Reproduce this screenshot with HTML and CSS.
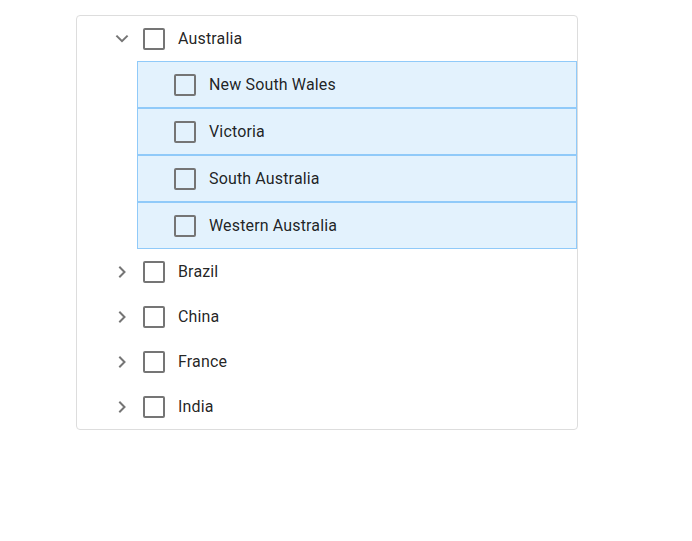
FILE: index.html
```html
<!DOCTYPE html>
<html>
<head>
<meta charset="utf-8">
<link rel="stylesheet" href="styles.css">
</head>
<body>
<div class="tree">
  <div class="row">
    <span class="toggle"><svg width="24" height="24" viewBox="0 0 24 24"><path d="M6.4 8.6 12 14.2l5.6-5.6" fill="none" stroke="#757575" stroke-width="2"/></svg></span>
    <span class="box"></span>
    <span class="label">Australia</span>
  </div>
  <div class="children">
    <div class="child"><span class="box"></span><span class="label">New South Wales</span></div>
    <div class="child"><span class="box"></span><span class="label">Victoria</span></div>
    <div class="child"><span class="box"></span><span class="label">South Australia</span></div>
    <div class="child"><span class="box"></span><span class="label">Western Australia</span></div>
  </div>
  <div class="row">
    <span class="toggle"><svg width="24" height="24" viewBox="0 0 24 24"><path d="M9.3 6.8 14.5 12l-5.2 5.2" fill="none" stroke="#757575" stroke-width="2"/></svg></span>
    <span class="box"></span>
    <span class="label">Brazil</span>
  </div>
  <div class="row">
    <span class="toggle"><svg width="24" height="24" viewBox="0 0 24 24"><path d="M9.3 6.8 14.5 12l-5.2 5.2" fill="none" stroke="#757575" stroke-width="2"/></svg></span>
    <span class="box"></span>
    <span class="label">China</span>
  </div>
  <div class="row">
    <span class="toggle"><svg width="24" height="24" viewBox="0 0 24 24"><path d="M9.3 6.8 14.5 12l-5.2 5.2" fill="none" stroke="#757575" stroke-width="2"/></svg></span>
    <span class="box"></span>
    <span class="label">France</span>
  </div>
  <div class="row">
    <span class="toggle"><svg width="24" height="24" viewBox="0 0 24 24"><path d="M9.3 6.8 14.5 12l-5.2 5.2" fill="none" stroke="#757575" stroke-width="2"/></svg></span>
    <span class="box"></span>
    <span class="label">India</span>
  </div>
</div>
</body>
</html>
```
FILE: styles.css
```css
html, body {
  margin: 0;
  padding: 0;
  background: #fff;
}
body {
  font-family: Roboto, "Liberation Sans", sans-serif;
  font-size: 16px;
  letter-spacing: 0.15px;
  color: rgba(0, 0, 0, 0.87);
}
.tree {
  margin: 15px 0 0 76px;
  width: 500px;
  border: 1px solid #dddddd;
  border-radius: 4px;
}
.row {
  height: 45px;
  display: flex;
  align-items: center;
  padding-left: 33px;
}
.toggle {
  width: 24px;
  height: 24px;
  display: flex;
  margin-right: 9px;
}
.box {
  width: 22px;
  height: 22px;
  box-sizing: border-box;
  border: 2px solid #757575;
  border-radius: 2px;
  flex: none;
}
.label {
  margin-left: 13px;
}
.children {
  margin-left: 60px;
}
.child {
  height: 45px;
  display: flex;
  align-items: center;
  padding-left: 36px;
  background: #e3f2fd;
  border: 1px solid #90caf9;
}
```
